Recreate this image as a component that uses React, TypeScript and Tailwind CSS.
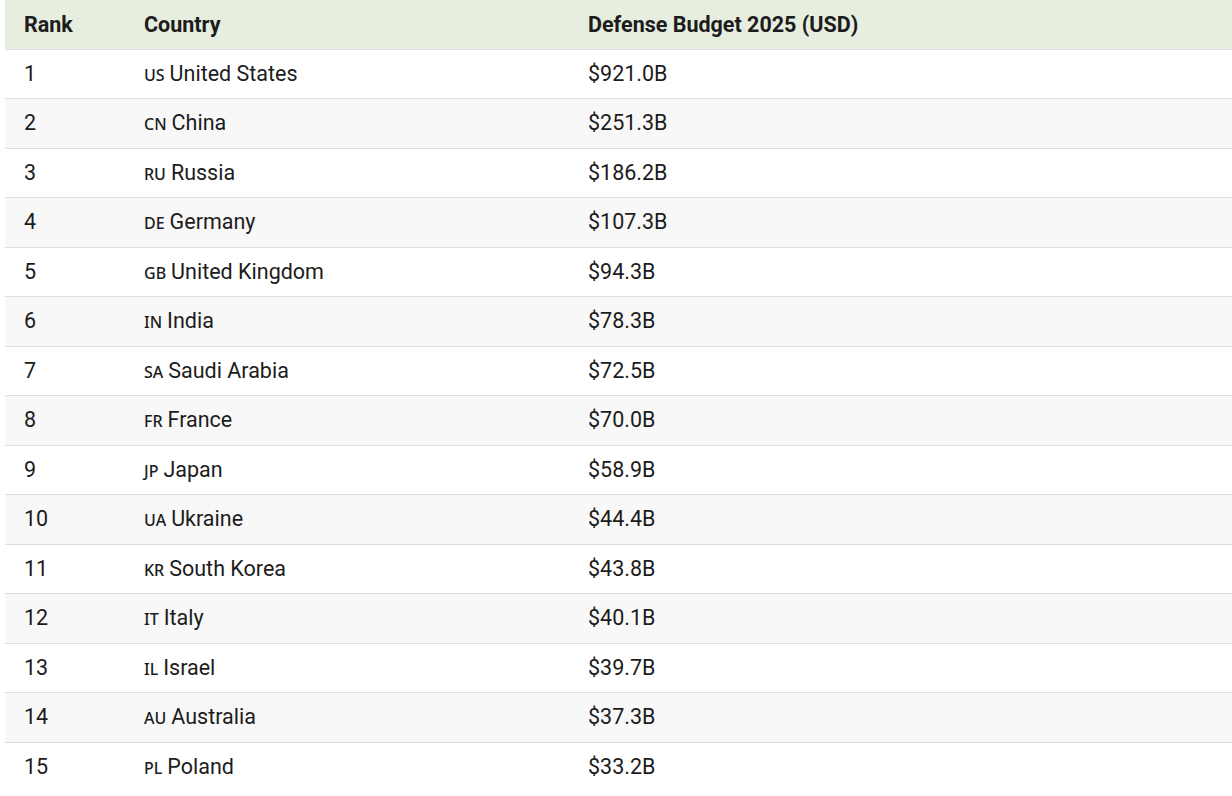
import React from "react";

const rows = [
  { rank: 1, code: "US", country: "United States", budget: "$921.0B" },
  { rank: 2, code: "CN", country: "China", budget: "$251.3B" },
  { rank: 3, code: "RU", country: "Russia", budget: "$186.2B" },
  { rank: 4, code: "DE", country: "Germany", budget: "$107.3B" },
  { rank: 5, code: "GB", country: "United Kingdom", budget: "$94.3B" },
  { rank: 6, code: "IN", country: "India", budget: "$78.3B" },
  { rank: 7, code: "SA", country: "Saudi Arabia", budget: "$72.5B" },
  { rank: 8, code: "FR", country: "France", budget: "$70.0B" },
  { rank: 9, code: "JP", country: "Japan", budget: "$58.9B" },
  { rank: 10, code: "UA", country: "Ukraine", budget: "$44.4B" },
  { rank: 11, code: "KR", country: "South Korea", budget: "$43.8B" },
  { rank: 12, code: "IT", country: "Italy", budget: "$40.1B" },
  { rank: 13, code: "IL", country: "Israel", budget: "$39.7B" },
  { rank: 14, code: "AU", country: "Australia", budget: "$37.3B" },
  { rank: 15, code: "PL", country: "Poland", budget: "$33.2B" },
];

export default function App() {
  return (
    <div className="w-[1232px] h-[796px] bg-white pl-[5px] overflow-hidden font-['Roboto',sans-serif] text-[#1c1c1c]">
      <table className="w-full border-collapse">
        <thead>
          <tr className="bg-[#e7eddf] h-[49px]">
            <th className="w-[139px] pl-[19px] pt-[1px] text-left text-[21.5px] font-bold">Rank</th>
            <th className="w-[444px] pt-[1px] text-left text-[21.5px] font-bold">Country</th>
            <th className="pt-[1px] text-left text-[21.5px] font-bold">Defense Budget 2025 (USD)</th>
          </tr>
        </thead>
        <tbody>
          {rows.map((r, i) => (
            <tr key={r.rank} className={`h-[49.5px] border-t border-[#dedede] text-[21.5px] ${i % 2 === 1 ? "bg-[#f8f8f8]" : "bg-white"}`}>
              <td className="pl-[19px]">{r.rank}</td>
              <td>
                <span className="text-[16px] font-medium font-['Noto_Sans',sans-serif] mr-[5px]">{r.code}</span>
                {r.country}
              </td>
              <td>{r.budget}</td>
            </tr>
          ))}
        </tbody>
      </table>
    </div>
  );
}
